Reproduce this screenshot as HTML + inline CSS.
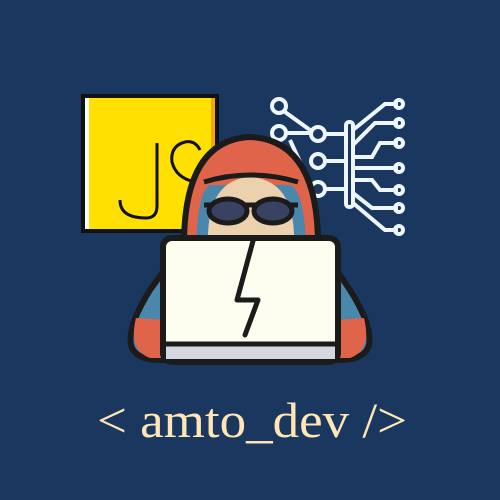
<!DOCTYPE html>
<html><head><style>html,body{margin:0;padding:0;background:#1a3760}svg{display:block}</style></head><body>
<svg width="500" height="500" viewBox="0 0 500 500" xmlns="http://www.w3.org/2000/svg">
<rect width="500" height="500" fill="#1a3760"/>
<!-- JS box -->
<rect x="83" y="96" width="134" height="135" fill="#FFE000" stroke="#111" stroke-width="4"/>
<rect x="85" y="98" width="4" height="131" fill="#fff"/>
<rect x="211" y="98" width="4" height="131" fill="#F7A800"/>
<path d="M157 143 V206 Q157 218 146 218 Q120 218 120 200" fill="none" stroke="#111" stroke-width="3"/>
<path d="M200 150 Q195 140 185 142 Q170 146 172 162 Q176 178 195 182" fill="none" stroke="#111" stroke-width="3"/>
<!-- circuit -->
<g fill="none" stroke="#eef6ff" stroke-width="4">
<circle cx="279" cy="106" r="7"/><circle cx="279" cy="133" r="7"/>
<circle cx="318" cy="134" r="7"/><circle cx="318" cy="161" r="7"/><circle cx="318" cy="189" r="7"/>
<rect x="346" y="122" width="7" height="85" rx="3"/>
<path d="M285 112 L310 130 M286 133 H311 M325 134 H346 M325 161 H346 M325 189 H346 M290 140 L311 186"/>
<path d="M353 130 L385 104 H398 M353 145 L375 123 H398 M353 157 H372 L380 143 H398 M353 168 H398 M353 180 H372 L380 190 H398 M353 193 L372 208 H398 M353 203 L385 230 H398"/>
<circle cx="399" cy="104" r="4"/><circle cx="399" cy="123" r="4"/><circle cx="399" cy="143" r="4"/><circle cx="399" cy="168" r="4"/><circle cx="399" cy="190" r="4"/><circle cx="399" cy="208" r="4"/><circle cx="399" cy="230" r="4"/>
</g>
<!-- body -->
<path d="M186 240 L150 290 Q125 330 132 348 Q138 360 160 360 H340 Q362 360 368 348 Q375 330 350 290 L316 240 Z" fill="#4a87ad" stroke="#1b1b1b" stroke-width="6" stroke-linejoin="round"/>
<path d="M136 318 Q128 350 150 358 H166 V320 Z" fill="#E0644A"/>
<path d="M364 318 Q372 350 350 358 H336 V320 Z" fill="#E0644A"/>
<!-- hood -->
<path d="M184 245 Q184 140 250 137 Q318 140 318 245 Z" fill="#E0644A" stroke="#1b1b1b" stroke-width="6" stroke-linejoin="round"/>
<path d="M196 245 Q198 190 210 185 L290 185 Q304 190 306 245 Z" fill="#4a87ad"/>
<!-- face -->
<path d="M208 245 Q206 180 250 177 Q296 180 294 245 Z" fill="#ebd1ae"/>
<path d="M204 182 Q250 168 298 182" fill="none" stroke="#1b1b1b" stroke-width="5"/>
<path d="M204 205 H298" stroke="#1b1b1b" stroke-width="5"/>
<ellipse cx="228" cy="211" rx="19" ry="12" fill="#3a4263" stroke="#1b1b1b" stroke-width="5"/>
<ellipse cx="273" cy="211" rx="19" ry="12" fill="#3a4263" stroke="#1b1b1b" stroke-width="5"/>
<!-- laptop -->
<rect x="163" y="238" width="175" height="124" rx="9" fill="#FEFEF0" stroke="#1b1b1b" stroke-width="6"/>
<rect x="166" y="345" width="169" height="14" fill="#d6d8e0"/>
<path d="M163 344 H338" stroke="#1b1b1b" stroke-width="5"/>
<path d="M253 241 L237 300 H258 L245 335" fill="none" stroke="#1b1b1b" stroke-width="5" stroke-linejoin="round" stroke-linecap="round"/>
<text x="97" y="437" font-family="Liberation Serif, serif" font-size="50" fill="#FFE6B4" textLength="310" lengthAdjust="spacingAndGlyphs">&lt; amto_dev /&gt;</text>
</svg>
</body></html>
